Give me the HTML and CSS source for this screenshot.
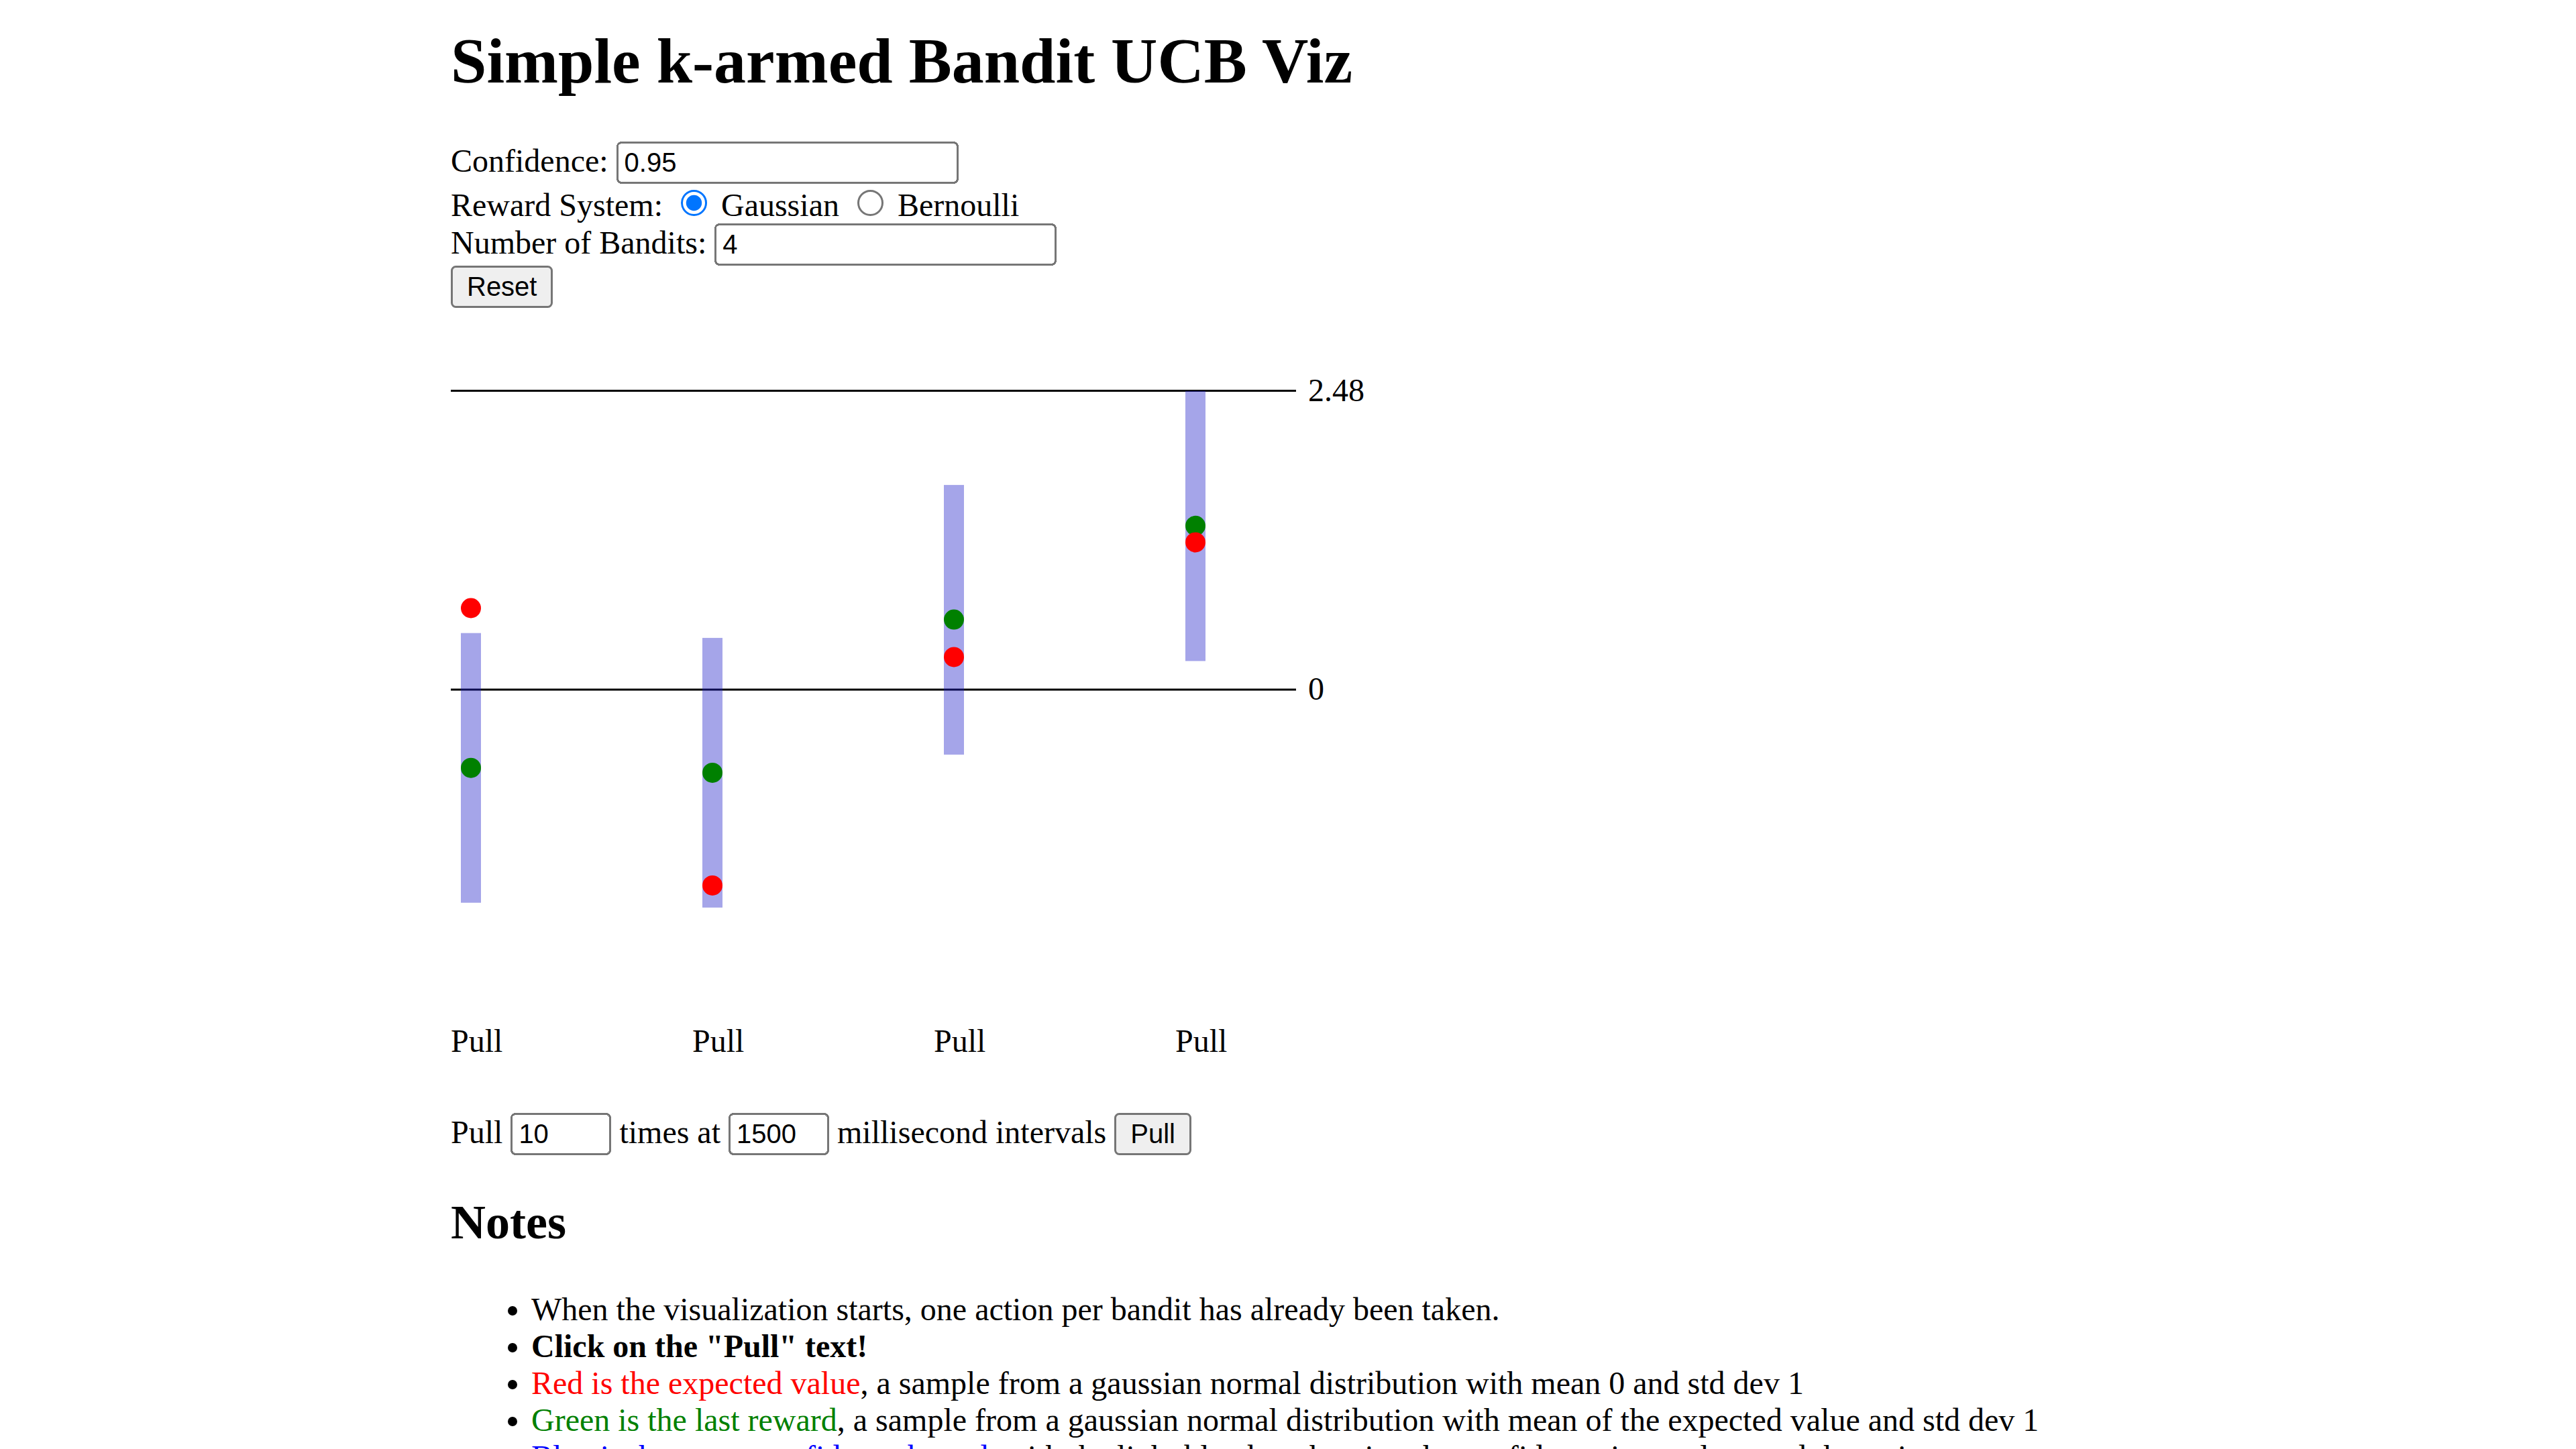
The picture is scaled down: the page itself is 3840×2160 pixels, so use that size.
FILE: index.html
```html
<!DOCTYPE html>
<html lang="en">
<head>
<meta charset="utf-8">
<title>Simple k-armed Bandit UCB Viz</title>
<link rel="stylesheet" href="styles.css">
</head>
<body>
<div class="page">
  <h1 class="title">Simple k-armed Bandit UCB Viz</h1>
  <div class="row">Confidence: <input class="field" type="text" value="0.95"></div>
  <div class="row">Reward System: <input type="radio" name="reward" checked> Gaussian <input type="radio" name="reward"> Bernoulli</div>
  <div class="row">Number of Bandits: <input class="field" type="text" value="4"></div>
  <div class="row"><button class="btn" type="button">Reset</button></div>

  <svg class="chart" width="460" height="399.2" viewBox="0 0 460 399.2">
    <line class="axis" x1="0" y1="40.5" x2="420" y2="40.5"></line>
    <line class="axis" x1="0" y1="189" x2="420" y2="189"></line>
    <text class="axis-label" x="426" y="45.6">2.48</text>
    <text class="axis-label" x="426" y="194.1">0</text>

    <rect class="interval" x="5" y="160.9" width="10" height="134"></rect>
    <circle class="reward" cx="10" cy="227.9" r="5"></circle>
    <circle class="expected" cx="10" cy="148.5" r="5"></circle>

    <rect class="interval" x="125" y="163.3" width="10" height="134"></rect>
    <circle class="reward" cx="130" cy="230.3" r="5"></circle>
    <circle class="expected" cx="130" cy="286.3" r="5"></circle>

    <rect class="interval" x="245" y="87.3" width="10" height="134"></rect>
    <circle class="reward" cx="250" cy="154.2" r="5"></circle>
    <circle class="expected" cx="250" cy="172.8" r="5"></circle>

    <rect class="interval" x="365" y="40.5" width="10" height="134.3"></rect>
    <circle class="reward" cx="370" cy="107.6" r="5"></circle>
    <circle class="expected" cx="370" cy="115.8" r="5"></circle>

    <text class="pull" x="0" y="368.9">Pull</text>
    <text class="pull" x="120" y="368.9">Pull</text>
    <text class="pull" x="240" y="368.9">Pull</text>
    <text class="pull" x="360" y="368.9">Pull</text>
  </svg>

  <div class="row">Pull <input class="short-field" type="text" value="10"> times at <input class="short-field" type="text" value="1500"> millisecond intervals <button class="btn" type="button">Pull</button></div>

  <h2 class="notes-title">Notes</h2>
  <ul class="notes">
    <li>When the visualization starts, one action per bandit has already been taken.</li>
    <li><strong>Click on the "Pull" text!</strong></li>
    <li><span class="red">Red is the expected value</span>, a sample from a gaussian normal distribution with mean 0 and std dev 1</li>
    <li><span class="green">Green is the last reward</span>, a sample from a gaussian normal distribution with mean of the expected value and std dev 1</li>
    <li><span class="blue">Blue is the upper confidence bound</span>, with the light blue bar showing the confidence interval around the estimate</li>
  </ul>
</div>
</body>
</html>
```

FILE: styles.css
```css
html {
  zoom: 3;
}

body {
  margin: 0;
  background: #ffffff;
  color: #000000;
  font-family: "Liberation Serif", "Times New Roman", serif;
  font-size: 16px;
}

.page {
  width: 832px;
  margin: 0 auto;
}

.title {
  font-size: 32px;
  font-weight: bold;
  margin: 11.8px 0 21.44px;
}

.field,
.short-field {
  font-family: "Liberation Sans", Arial, sans-serif;
  font-size: 13.333px;
  box-sizing: border-box;
  height: 21px;
  padding: 1px 2px;
}

.field {
  width: 170px;
}

.short-field {
  width: 50px;
}

.btn {
  font-family: "Liberation Sans", Arial, sans-serif;
  font-size: 13.333px;
}

.chart {
  display: block;
  margin-top: 0.8px;
}

.axis {
  stroke: #000000;
  stroke-width: 1;
}

.axis-label,
.pull {
  font-family: "Liberation Serif", "Times New Roman", serif;
  font-size: 16px;
  fill: #000000;
}

.pull {
  cursor: pointer;
}

.interval {
  fill: rgba(30, 30, 200, 0.4);
}

.reward {
  fill: #008000;
}

.expected {
  fill: #ff0000;
}

.notes-title {
  font-size: 24px;
  font-weight: bold;
  margin: 19.92px 0;
}

.notes {
  margin: 16px 0;
  padding-left: 40px;
}

.red {
  color: #ff0000;
}

.green {
  color: #008000;
}

.blue {
  color: #0000ff;
}
```
